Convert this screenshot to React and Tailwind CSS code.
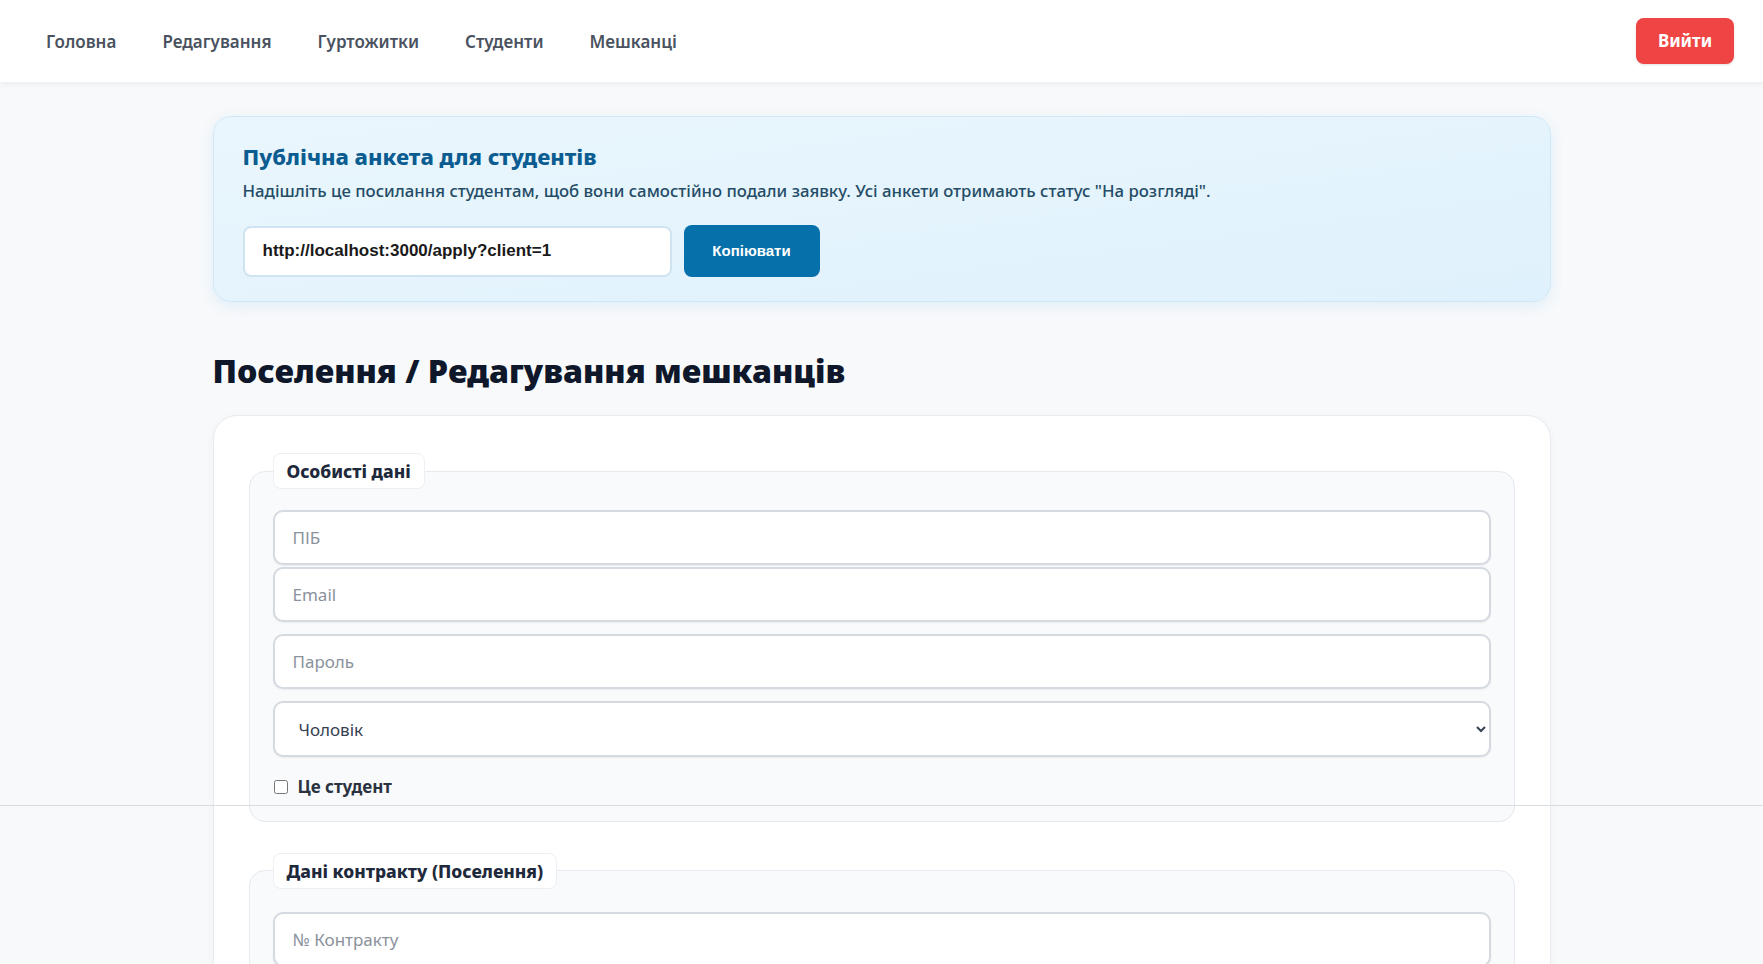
import React from 'react';

const navLinks = ['Головна', 'Редагування', 'Гуртожитки', 'Студенти', 'Мешканці'];

function Field({ placeholder, className = '' }) {
  return (
    <input
      type="text"
      placeholder={placeholder}
      className={`block w-full h-[55px] px-[18px] rounded-[10px] border-2 border-[#d5d9e0] bg-white text-[17px] text-gray-700 placeholder:text-[#8b929c] shadow-[0_1px_2px_rgba(15,23,42,0.06)] outline-none ${className}`}
    />
  );
}

function Section({ title, children, className = '' }) {
  return (
    <fieldset
      className={`rounded-[16px] border border-[#e6eaef] bg-[#f8fafc] px-[23px] pb-[21px] pt-[4px] ${className}`}
    >
      <legend className="rounded-[8px] border border-[#eceff3] bg-white px-[13px] py-[4px] text-[17.5px] font-extrabold text-[#1e293b]">
        {title}
      </legend>
      {children}
    </fieldset>
  );
}

export default function App() {
  return (
    <div className="min-h-screen bg-[#f7f9fb] font-['Noto_Sans',sans-serif] text-slate-900">
      {/* Top nav */}
      <header className="h-[82px] bg-white shadow-[0_2px_6px_rgba(15,23,42,0.06)] flex items-center justify-between pl-[46px] pr-[29px]">
        <nav className="flex items-center gap-[46px] pt-[2px]">
          {navLinks.map((l) => (
            <a key={l} href="#" className="text-[17px] font-semibold text-[#4a5260]">
              {l}
            </a>
          ))}
        </nav>
        <button className="h-[46px] w-[98px] rounded-[8px] bg-[#ef4444] text-white text-[17px] font-bold shadow-sm">
          Вийти
        </button>
      </header>

      <main className="mx-auto w-[1338px] pt-[34px]">
        {/* Public form link */}
        <section className="rounded-[18px] border border-[#cfe8f7] bg-gradient-to-br from-[#eaf6fd] to-[#dff1fc] px-[29px] pt-[24px] pb-[24px] shadow-[0_4px_14px_rgba(56,160,220,0.12)]">
          <h2 className="text-[22px] font-extrabold text-[#0b5d91] leading-[30px]">Публічна анкета для студентів</h2>
          <p className="mt-[8px] text-[16.75px] font-medium text-[#244c66] leading-[24px]">
            Надішліть це посилання студентам, щоб вони самостійно подали заявку. Усі анкети отримають статус "На розгляді".
          </p>
          <div className="mt-[22px] flex items-center gap-[12px]">
            <input
              readOnly
              value="http://localhost:3000/apply?client=1"
              className="h-[51px] w-[429px] rounded-[8px] border-2 border-[#cfe3f0] bg-white px-[18px] font-['Liberation_Sans',Arial,sans-serif] text-[17px] font-semibold text-[#1a1a1a] outline-none"
            />
            <button className="h-[52px] w-[136px] rounded-[8px] bg-[#0670aa] font-['Liberation_Sans',Arial,sans-serif] text-[15px] font-bold text-white">
              Копіювати
            </button>
          </div>
        </section>

        <h1 className="mt-[49px] text-[32.2px] font-black leading-[40px] text-[#0f172a]">
          Поселення / Редагування мешканців
        </h1>

        {/* Form card */}
        <div className="mt-[24px] rounded-[24px] border border-[#e8ebef] bg-white px-[35px] pt-[37px] pb-[40px] shadow-[0_2px_8px_rgba(15,23,42,0.04)]">
          <Section title="Особисті дані">
            <div className="pt-[17px]">
              <Field placeholder="ПІБ" />
              <Field placeholder="Email" className="mt-[2px]" />
              <Field placeholder="Пароль" className="mt-[12px]" />
              <select className="mt-[12px] block w-full h-[56px] rounded-[10px] border-2 border-[#d5d9e0] bg-white pl-[20px] pr-[10px] text-[17px] text-[#374151] shadow-[0_1px_2px_rgba(15,23,42,0.06)] outline-none">
                <option>Чоловік</option>
                <option>Жінка</option>
              </select>
              <label className="mt-[17px] flex items-center gap-[10px]">
                <input type="checkbox" className="h-[14px] w-[14px] ml-[1px]" />
                <span className="text-[17px] font-bold text-[#2b3340]">Це студент</span>
              </label>
            </div>
          </Section>

          <Section title="Дані контракту (Поселення)" className="mt-[31px]">
            <div className="pt-[19px]">
              <Field placeholder="№ Контракту" />
              <Field placeholder="Дата заселення" className="mt-[12px]" />
              <Field placeholder="Дата виселення" className="mt-[12px]" />
            </div>
          </Section>
        </div>
      </main>

      {/* thin overlay line seen across the capture */}
      <div className="pointer-events-none absolute left-0 top-[805px] h-px w-full bg-[#d9dde2]" />
    </div>
  );
}
